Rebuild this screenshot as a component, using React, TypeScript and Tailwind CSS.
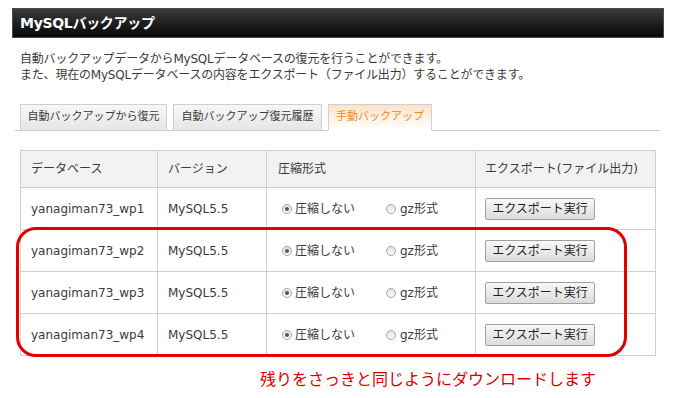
import React from "react";

const rows = ["yanagiman73_wp1", "yanagiman73_wp2", "yanagiman73_wp3", "yanagiman73_wp4"];

function Radio({ checked }: { checked?: boolean }) {
  return (
    <span className="inline-flex h-[10px] w-[10px] items-center justify-center rounded-full border border-[#a9a9a9] bg-gradient-to-b from-[#e2e2e2] to-[#fafafa]">
      {checked && <span className="h-[4px] w-[4px] rounded-full bg-[#555]" />}
    </span>
  );
}

export default function App() {
  return (
    <div
      className="h-[398px] w-[675px] bg-white pl-[12px] pt-[8px] text-[#3a3a3a]"
      style={{ fontFamily: '"DejaVu Sans", "Noto Sans CJK JP", sans-serif' }}
    >
      {/* Title bar */}
      <div className="flex h-[30px] w-[652px] items-center border border-[#4a4a4a] bg-gradient-to-b from-[#3b3b3b] to-[#080808] pl-[7px]">
        <h1 className="text-[14px] font-bold tracking-[-0.3px] text-white">MySQLバックアップ</h1>
      </div>

      <div className="pl-[8px]">
        <p className="mt-[13px] text-[12px] leading-[16px] tracking-[-0.2px]">
          自動バックアップデータからMySQLデータベースの復元を行うことができます。
          <br />
          また、現在のMySQLデータベースの内容をエクスポート（ファイル出力）することができます。
        </p>

        {/* Tabs */}
        <div className="-ml-[5px] mt-[21px] flex w-[645px] gap-[6px] border-b border-[#c8c8c8] pl-[5px]">
          <div className="-mb-px flex h-[27px] w-[147px] items-center justify-center border border-[#cfcfcf] bg-gradient-to-b from-[#f7f7f7] to-[#e6e6e6] text-[11px]">
            自動バックアップから復元
          </div>
          <div className="-mb-px flex h-[27px] w-[149px] items-center justify-center border border-[#cfcfcf] bg-gradient-to-b from-[#f7f7f7] to-[#e6e6e6] text-[11px]">
            自動バックアップ復元履歴
          </div>
          <div className="-mb-px flex h-[27px] w-[104px] items-center justify-center border border-[#cfcfcf] border-b-white bg-gradient-to-b from-[#fde3c6] to-white text-[11px] text-[#f0891e]">
            手動バックアップ
          </div>
        </div>

        {/* Table */}
        <div className="relative mt-[19px] w-[636px]">
          <table className="w-full border-collapse text-[12px]">
            <thead>
              <tr className="h-[37px] bg-[#f2f2f2]">
                <th className="w-[137px] border border-[#cfcfcf] pl-[10px] text-left font-normal">データベース</th>
                <th className="w-[109px] border border-[#cfcfcf] pl-[10px] text-left font-normal">バージョン</th>
                <th className="w-[209px] border border-[#cfcfcf] pl-[11px] text-left font-normal">圧縮形式</th>
                <th className="border border-[#cfcfcf] pl-[9px] text-left font-normal">エクスポート(ファイル出力)</th>
              </tr>
            </thead>
            <tbody>
              {rows.map((name) => (
                <tr key={name} className="h-[42px]">
                  <td className="border border-[#cfcfcf] pl-[10px]">{name}</td>
                  <td className="border border-[#cfcfcf] pl-[10px]">MySQL5.5</td>
                  <td className="border border-[#cfcfcf] pl-[15px]">
                    <div className="flex items-center">
                      <label className="flex w-[104px] items-center gap-[3px]">
                        <Radio checked />
                        <span>圧縮しない</span>
                      </label>
                      <label className="flex items-center gap-[4px]">
                        <Radio />
                        <span>gz形式</span>
                      </label>
                    </div>
                  </td>
                  <td className="border border-[#cfcfcf] pl-[9px]">
                    <button className="h-[22px] w-[110px] rounded-[2px] border border-[#a0a0a0] bg-gradient-to-b from-[#f8f8f8] to-[#dcdcdc] text-[12px] text-[#222]">
                      エクスポート実行
                    </button>
                  </td>
                </tr>
              ))}
            </tbody>
          </table>

          {/* Red annotation frame */}
          <div className="pointer-events-none absolute left-[-4px] top-[77px] h-[130px] w-[611px] rounded-[20px] border-[3px] border-[#e00000]" />
        </div>

        <p className="mt-[12px] pl-[240px] text-[16px] text-[#d90000]">残りをさっきと同じようにダウンロードします</p>
      </div>
    </div>
  );
}
